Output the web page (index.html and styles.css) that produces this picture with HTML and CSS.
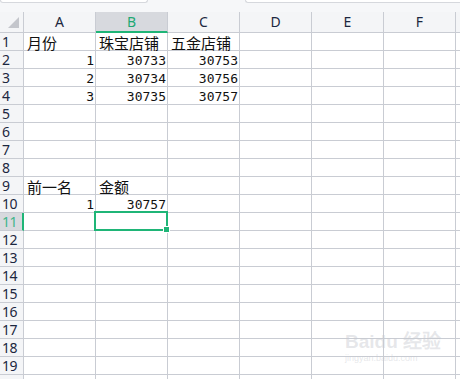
FILE: index.html
```html
<!DOCTYPE html>
<html lang="zh-CN">
<head>
    <meta charset="UTF-8">
    <meta name="viewport" content="width=device-width, initial-scale=1.0">
    <title>表格</title>
    <link rel="stylesheet" href="styles.css">
</head>
<body>
    <div class="topbar">
        <div class="namebox"></div>
        <div class="gap"></div>
        <div class="formula"></div>
    </div>
    <div class="sheet" id="sheet"></div>
    <div class="watermark">
        <div class="wm-logo">Bai<span class="paw">du</span> 经验</div>
        <div class="wm-url">jingyan.baidu.com</div>
    </div>

    <script>
        const cols = ['A', 'B', 'C', 'D', 'E', 'F', 'G'];
        // row number -> cell values (A, B, C)
        const data = {
            1: ['月份', '珠宝店铺', '五金店铺'],
            2: [1, 30733, 30753],
            3: [2, 30734, 30756],
            4: [3, 30735, 30757],
            9: ['前一名', '金额'],
            10: [1, 30757]
        };
        const activeCol = 'B';
        const activeRow = 11;

        const sheet = document.getElementById('sheet');

        function addCell(cls, text) {
            const el = document.createElement('div');
            el.className = cls;
            if (text !== undefined) el.textContent = text;
            sheet.appendChild(el);
            return el;
        }

        // column header row
        const corner = addCell('corner');
        corner.innerHTML = '<span class="tri"></span>';
        cols.forEach(c => {
            addCell('colhead' + (c === activeCol ? ' active' : ''), c === 'G' ? '' : c);
        });

        for (let r = 1; r <= 20; r++) {
            // row 20 only peeks in at the bottom edge, its number is below the fold
            addCell('rowhead' + (r === activeRow ? ' active' : ''), r < 20 ? r : '');
            const vals = data[r] || [];
            cols.forEach((c, i) => {
                const v = vals[i];
                let cls = 'cell';
                if (typeof v === 'number') cls += ' num';
                else if (v) cls += ' txt';
                const el = addCell(cls, v === undefined ? '' : v);
                if (r === activeRow && c === activeCol) {
                    el.innerHTML = '<span class="sel"><span class="handle"></span></span>';
                }
            });
        }
    </script>
</body>
</html>
```

FILE: styles.css
```css
body {
    margin: 0;
    width: 460px;
    height: 379px;
    overflow: hidden;
    background-color: #f6f7f9;
    font-family: "Noto Sans CJK SC", sans-serif;
    color: #111;
    position: relative;
}
.topbar {
    height: 12px;
    display: flex;
    background-color: #f6f7f9;
}
.namebox {
    width: 146px;
    height: 2px;
    background-color: #fff;
    border: 1px solid #d6d8dd;
    border-top: none;
    border-radius: 0 0 3px 3px;
    box-sizing: content-box;
}
.gap {
    width: 97px;
}
.formula {
    flex: 1;
    height: 2px;
    background-color: #fff;
    border: 1px solid #d6d8dd;
    border-top: none;
    border-right: none;
    border-radius: 0 0 0 3px;
}
.sheet {
    display: grid;
    grid-template-columns: 24px repeat(6, 72px) 10px;
    grid-template-rows: 21px repeat(20, 18px);
    background-color: #fff;
}
.sheet > div {
    box-sizing: border-box;
    border-right: 1px solid #c9ccd3;
    border-bottom: 1px solid #c9ccd3;
    white-space: nowrap;
    position: relative;
}
.corner {
    background-color: #f4f5f7;
}
.tri {
    position: absolute;
    left: 8px;
    top: 5px;
    width: 0;
    height: 0;
    border-left: 11px solid transparent;
    border-bottom: 11px solid #c4c6cc;
}
.colhead {
    background-color: #f4f5f7;
    text-align: center;
    font-family: "Noto Sans", sans-serif;
    font-size: 14px;
    line-height: 20px;
    color: #1c2740;
}
.colhead.active {
    background-color: #d7d9de;
    color: #1fa874;
    border-bottom: 2px solid #1fb577;
}
.rowhead {
    background-color: #f4f5f7;
    font-family: "Noto Sans", sans-serif;
    font-size: 14px;
    line-height: 17px;
    padding-left: 2px;
    color: #1c2740;
    letter-spacing: -0.5px;
}
.rowhead.active {
    background-color: #d7d9de;
    color: #3fb58a;
    border-right: 2px solid #1fb577;
}
.cell.txt {
    font-size: 15px;
    line-height: 17px;
    padding-top: 1px;
    padding-left: 3px;
}
.cell.num {
    font-family: "DejaVu Sans Mono", monospace;
    font-size: 13px;
    line-height: 17px;
    padding-top: 1px;
    text-align: right;
    padding-right: 1px;
    color: #111;
}
.sheet > .cell:has(.sel) {
    z-index: 2;
}
.sel {
    position: absolute;
    left: -2px;
    top: -2px;
    right: -1px;
    bottom: -1px;
    border: 2px solid #1fb577;
}
.handle {
    position: absolute;
    right: -4px;
    bottom: -4px;
    width: 5px;
    height: 5px;
    background-color: #1fb577;
    border: 1px solid #fff;
}
.watermark {
    position: absolute;
    left: 345px;
    top: 332px;
    color: rgba(200, 202, 208, 0.45);
    font-family: "Liberation Sans", sans-serif;
    z-index: 3;
}
.wm-logo {
    font-size: 19px;
    font-weight: bold;
    line-height: 20px;
}
.wm-url {
    font-size: 9px;
    line-height: 12px;
}
```
